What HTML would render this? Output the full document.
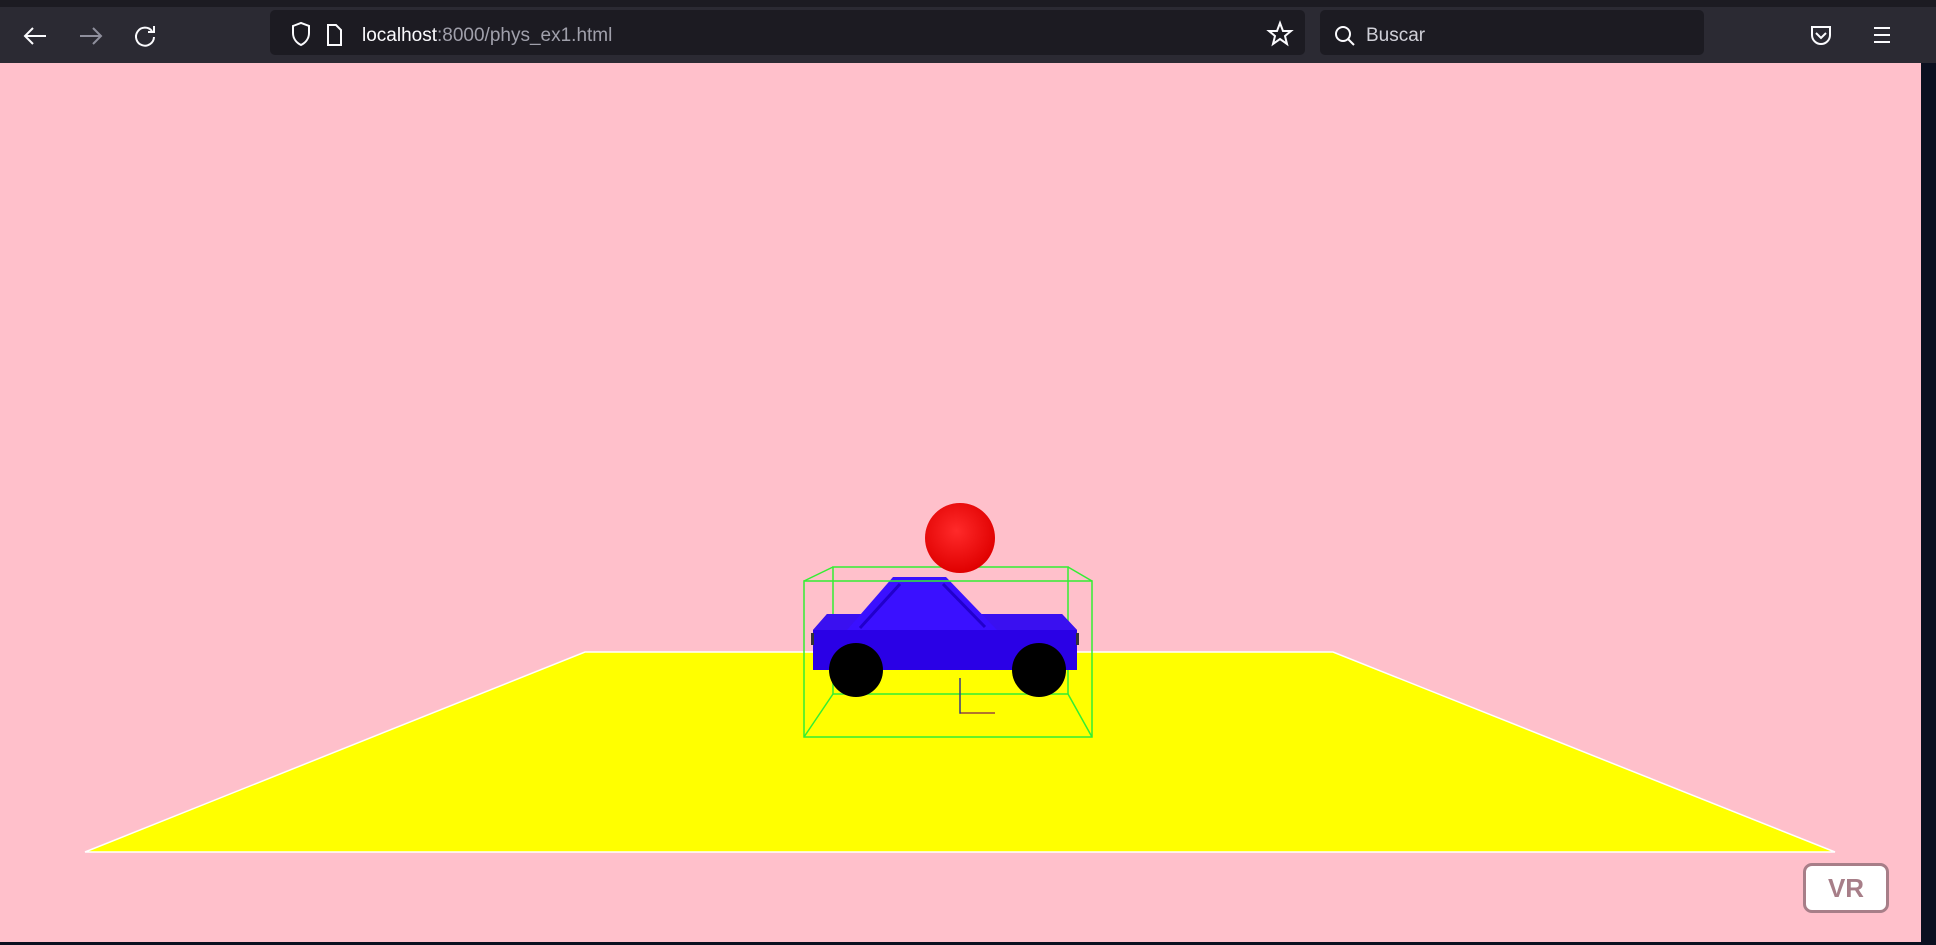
<!DOCTYPE html>
<html><head><style>
body{margin:0;width:1936px;height:945px;overflow:hidden;background:#0b1020;font-family:"Liberation Sans",sans-serif;position:relative}
.tb{position:absolute;left:0;top:0;width:1936px;height:63px;background:#2b2a33}
.top{position:absolute;left:0;top:0;width:1936px;height:7px;background:#1c1b22}
.url{position:absolute;left:270px;top:10px;width:1035px;height:45px;background:#1c1b22;border-radius:5px}
.srch{position:absolute;left:1320px;top:10px;width:384px;height:45px;background:#1c1b22;border-radius:5px}
.t{position:absolute;color:#fbfbfe;font-size:19px;top:25px}
.page{position:absolute;left:0;top:63px;width:1921px;height:879px;background:#ffc0cb}
.vr{position:absolute;left:1803px;top:863px;width:80px;height:44px;border:3px solid #a77e88;border-radius:9px;background:#fff;color:#a77e88;font-weight:bold;font-size:26px;text-align:center;line-height:44px}
</style></head><body>
<div class="tb"><div class="top"></div>
<svg width="1936" height="63" style="position:absolute;left:0;top:3px" fill="none" stroke="#fbfbfe" stroke-width="2">
<path d="M46 33H25M33 25l-8 8 8 8"/>
<path d="M80 33h21M93 25l8 8-8 8" stroke="#8f8f9d"/>
<path d="M152 28a9 9 0 1 0 2 6M154 23v6h-6"/>
<path d="M1812 24h18v8a9 9 0 0 1-18 0z M1816 30l5 5 5-5"/>
<path d="M1874 25h16M1874 32h16M1874 39h16"/>
</svg>
<div class="url"></div><div class="srch"></div>
<svg width="1936" height="63" style="position:absolute;left:0;top:3px" fill="none" stroke="#fbfbfe" stroke-width="2">
<path d="M293 23l8-3 8 3v7c0 6-4 10-8 12-4-2-8-6-8-12z"/>
<path d="M328 22h8l5 5v15h-13z"/>
<path d="M1280 20l3 8h8l-6 5 2 8-7-5-7 5 2-8-6-5h8z"/>
<circle cx="1343" cy="31" r="7"/><path d="M1348 36l6 6"/>
</svg>
<div class="t" style="left:362px">localhost<span style="color:#a0a0ab">:8000/phys_ex1.html</span></div>
<div class="t" style="left:1366px;color:#d0d0d8">Buscar</div>
</div>
<div class="page"></div>
<svg width="1936" height="945" style="position:absolute;left:0;top:0">
<polygon points="585,652 1333,652 1835,852 85,852" fill="#ffff00" stroke="#fff" stroke-width="1.5"/>
<g stroke="#33ee33" stroke-width="1.5" fill="none">
<rect x="833" y="567" width="235" height="127"/>
</g>
<defs><radialGradient id="g" cx="0.45" cy="0.4" r="0.6"><stop offset="0" stop-color="#ff2a2a"/><stop offset="1" stop-color="#e00000"/></radialGradient></defs>
<circle cx="960" cy="538" r="35" fill="url(#g)"/>
<polygon points="813,630 827,614 1062,614 1077,630 1077,670 813,670" fill="#2a00e6"/>
<polygon points="827,614 1062,614 1077,630 813,630" fill="#3a10f0"/>
<polygon points="893,577 946,577 997,630 847,630" fill="#3a10ff"/>
<path d="M900 584 L860 628 M943 584 L985 627" stroke="#2200cc" stroke-width="3"/>
<rect x="811" y="633" width="3" height="12" fill="#333"/><rect x="1076" y="633" width="3" height="12" fill="#333"/>
<circle cx="856" cy="670" r="27" fill="#000"/><circle cx="1039" cy="670" r="27" fill="#000"/>
<g stroke="#33ee33" stroke-width="1.5" fill="none">
<rect x="804" y="581" width="288" height="156"/>
<path d="M804 581L833 567M1092 581L1068 567M804 737L833 694M1092 737L1068 694"/>
</g>
<path d="M960 678V713H995" stroke="#3a3a80" stroke-width="1.5" fill="none"/>
<path d="M961 713H995" stroke="#c06020" stroke-width="1.2"/>
</svg>
<div class="vr">VR</div>
</body></html>
